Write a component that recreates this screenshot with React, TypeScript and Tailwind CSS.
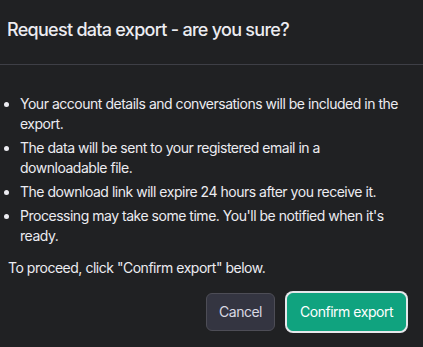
export default function App() {
  const items = [
    "Your account details and conversations will be included in the export.",
    "The data will be sent to your registered email in a downloadable file.",
    "The download link will expire 24 hours after you receive it.",
    "Processing may take some time. You'll be notified when it's ready.",
  ];

  return (
    <div
      className="h-[347px] w-[423px] bg-[#202123] text-[#ececf1]"
      style={{ fontFamily: "Inter, 'Noto Sans', sans-serif" }}
    >
      <div className="border-b border-[#3e3f46] pl-[7px] pt-4 pb-5">
        <h2 className="text-lg font-medium leading-7 tracking-[-0.04em] text-[#ececf1]">
          Request data export - are you sure?
        </h2>
      </div>

      <div className="pt-[29px] pl-[8px] pr-4 tracking-[-0.03em]">
        <ul className="list-disc space-y-1 pl-3 pr-[5px] text-sm leading-5 text-[#ececf1]">
          {items.map((item) => (
            <li key={item}>{item}</li>
          ))}
        </ul>
        <p className="mt-3 text-sm leading-5">
          To proceed, click "Confirm export" below.
        </p>

        <div className="mt-[15px] flex justify-end gap-3 pr-[1px]">
          <button className="rounded-md border border-[#4d4d56] bg-[#343541] px-3 py-2 text-sm leading-5 text-[#d9d9e3]">
            Cancel
          </button>
          <button className="rounded-md border border-[#10a37f] bg-[#10a37f] px-3 py-2 text-sm leading-5 text-white ring-2 ring-[#e5e7eb] ring-offset-0">
            Confirm export
          </button>
        </div>
      </div>
    </div>
  );
}
